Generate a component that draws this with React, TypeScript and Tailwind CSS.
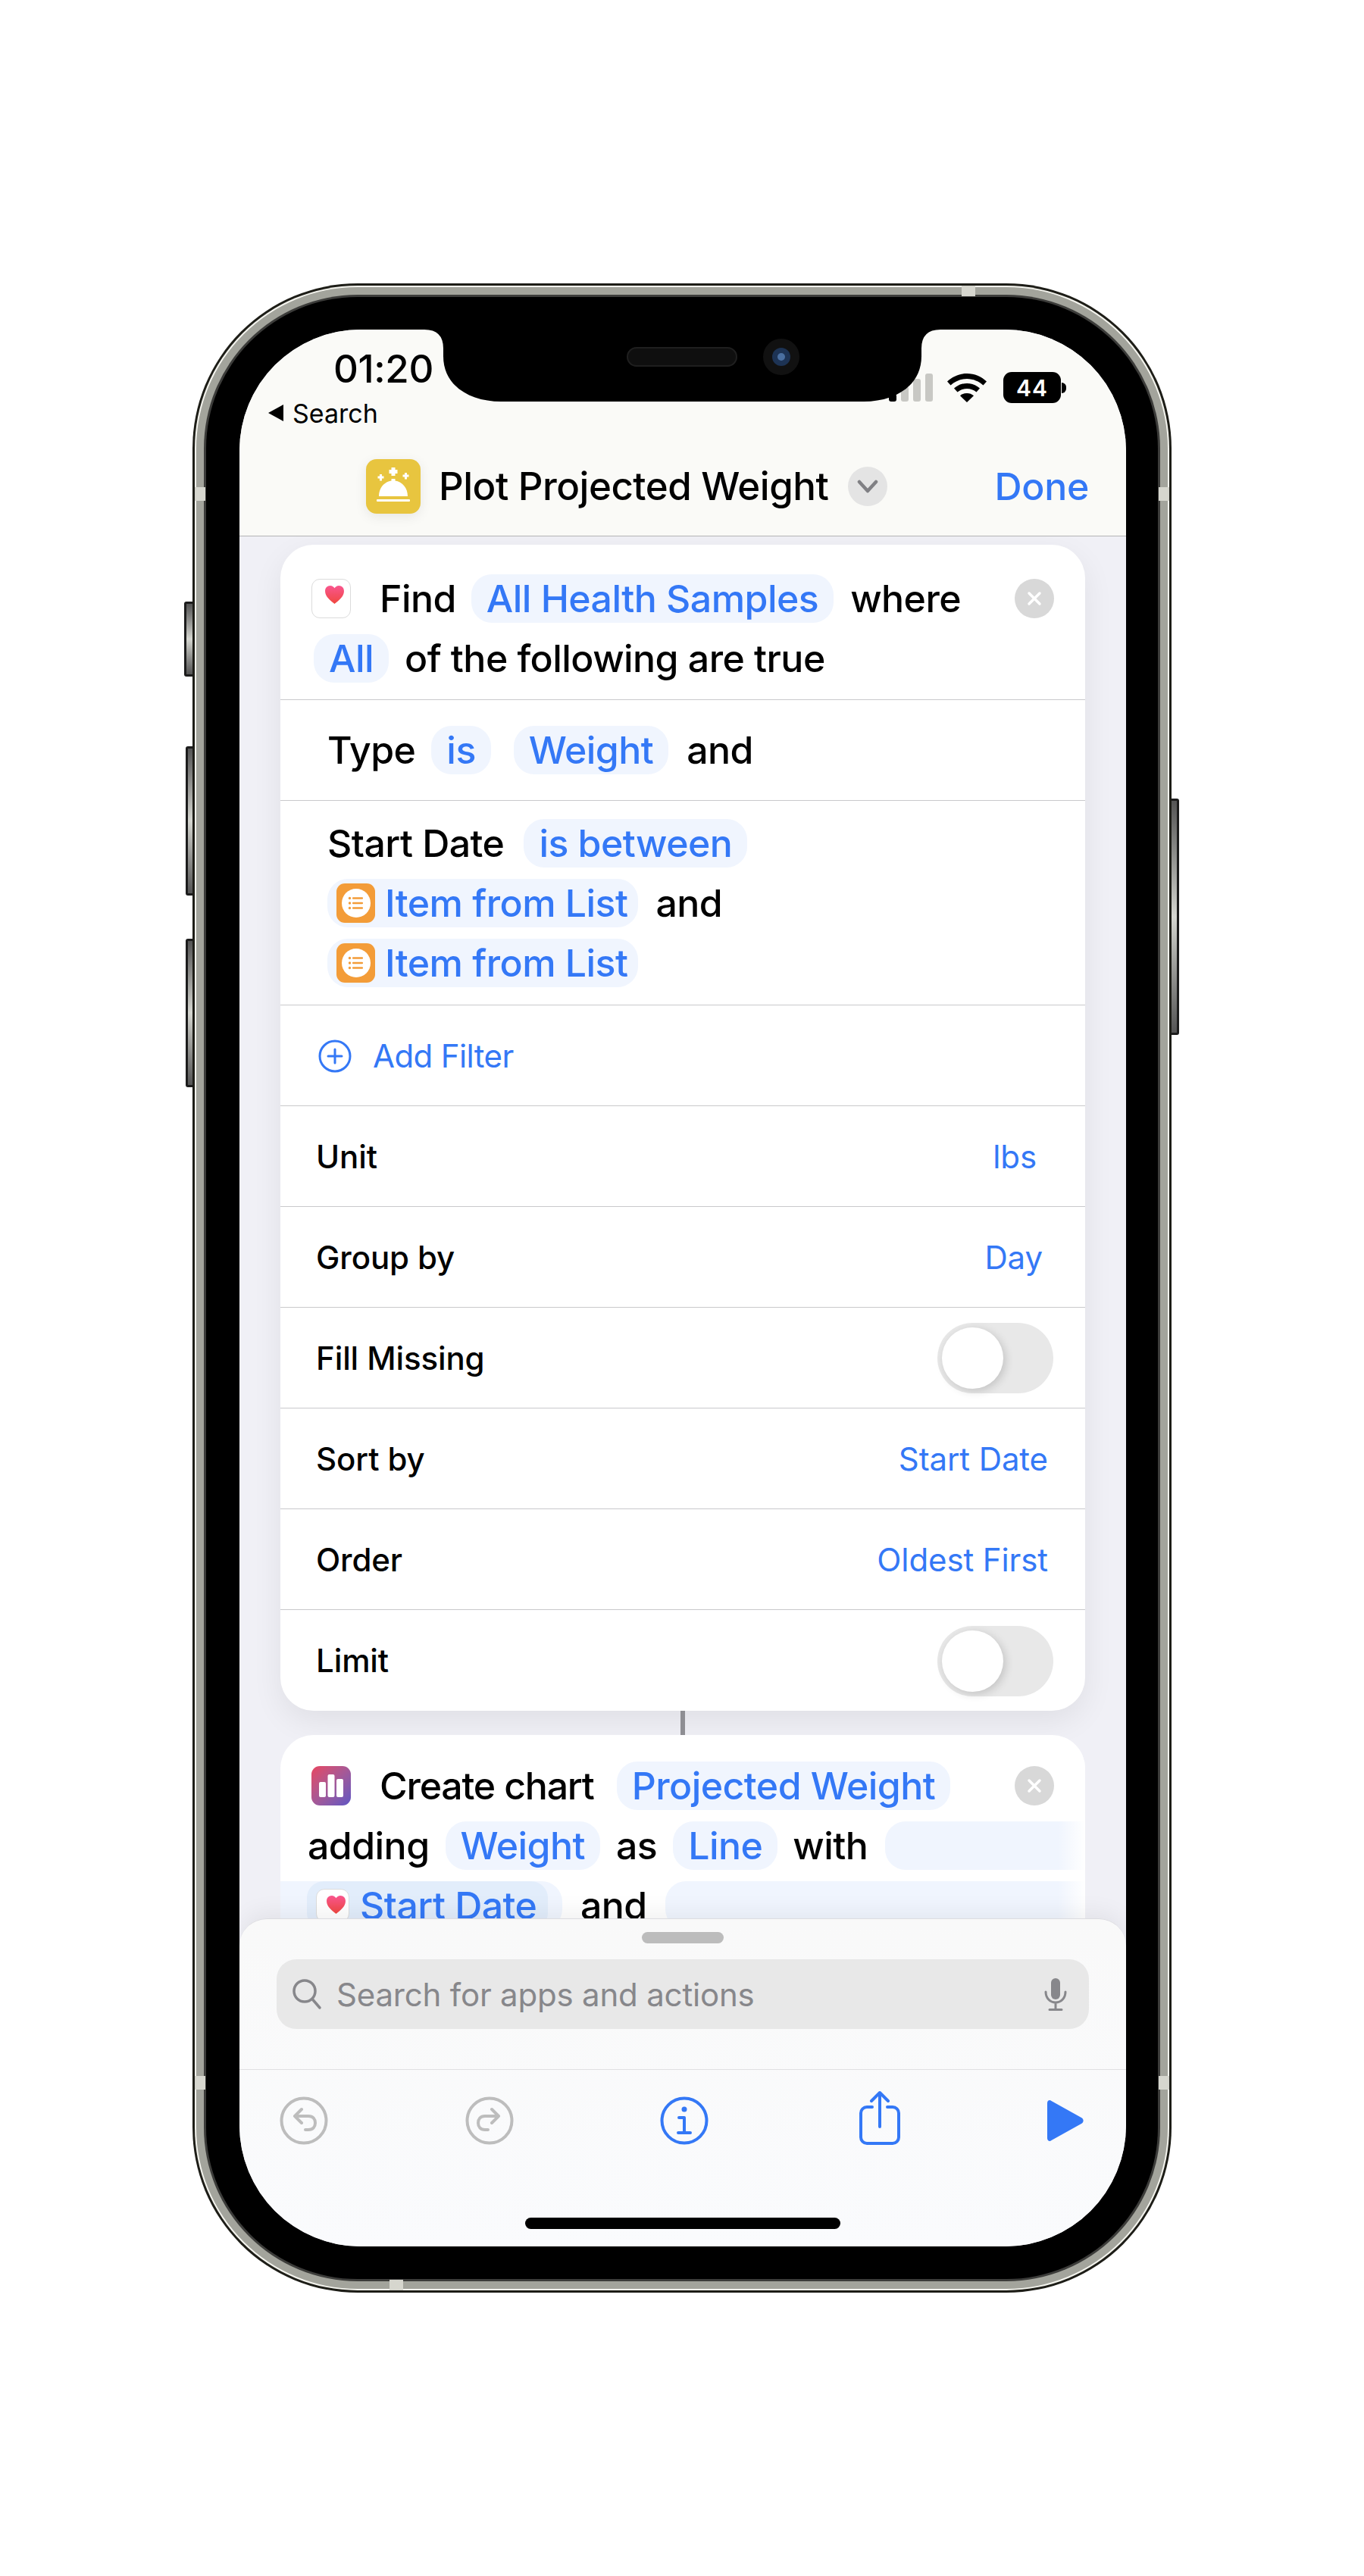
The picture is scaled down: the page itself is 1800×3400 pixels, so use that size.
import type { ReactNode } from 'react';

function Pill({ children, className = 'px-[20px]' }: { children: ReactNode; className?: string }) {
  return (
    <span className={`inline-flex h-[64px] shrink-0 items-center whitespace-nowrap rounded-[27px] bg-[#f0f5fe] text-[#3478f6] ${className}`}>
      {children}
    </span>
  );
}

function HeartIcon({ size = 52 }: { size?: number }) {
  return (
    <span
      className="inline-flex shrink-0 items-start justify-center rounded-[11px] border border-[#dcdcdc] bg-white pl-[9px] pt-[8px]"
      style={{ width: size, height: size }}
    >
      <svg width="25" height="24" viewBox="0 0 26 25" className="shrink-0">
        <defs>
          <linearGradient id="heart" x1="0" y1="0" x2="0" y2="1">
            <stop offset="0" stopColor="#f9568f" />
            <stop offset="1" stopColor="#f0473f" />
          </linearGradient>
        </defs>
        <path d="M13 25C7 20 0 15 0 7.500C0 3 3 0 7 0c2.600 0 4.800 1.300 6 3.500C14.200 1.300 16.400 0 19 0c4 0 7 3 7 7.500C26 15 19 20 13 25Z" fill="url(#heart)" />
      </svg>
    </span>
  );
}

function ListIcon() {
  return (
    <span className="mr-[13px] inline-flex h-[52px] w-[51px] shrink-0 items-center justify-center rounded-[11px] bg-[#f39c38]">
      <svg width="38" height="38" viewBox="0 0 38 38">
        <circle cx="19" cy="19" r="19" fill="#fff" />
        <g fill="#f39c38">
          <circle cx="10.500" cy="12.500" r="1.700" />
          <circle cx="10.500" cy="19" r="1.700" />
          <circle cx="10.500" cy="25.500" r="1.700" />
          <rect x="14" y="11.300" width="14" height="2.400" rx="1" />
          <rect x="14" y="17.800" width="14" height="2.400" rx="1" />
          <rect x="14" y="24.300" width="14" height="2.400" rx="1" />
        </g>
      </svg>
    </span>
  );
}

function CloseButton() {
  return (
    <span className="absolute right-[41px] flex h-[52px] w-[52px] items-center justify-center rounded-full bg-[#d8d8d8]">
      <svg width="20" height="20" viewBox="0 0 20 20" fill="none" stroke="#fff" strokeWidth="3.500" strokeLinecap="round">
        <path d="M3 3l14 14M17 3L3 17" />
      </svg>
    </span>
  );
}

function Toggle() {
  return (
    <span className="flex h-[93px] w-[153px] items-center rounded-full bg-[#e8e8e8] pl-[6px]">
      <span className="h-[81px] w-[81px] rounded-full bg-white shadow-[3px_3px_12px_rgba(0,0,0,0.16)]" />
    </span>
  );
}

function SettingRow({ label, value, valueClass = '', toggle }: { label: string; value?: string; valueClass?: string; toggle?: boolean }) {
  return (
    <div className="flex h-[133px] items-center justify-between border-b border-[#c9c9cb] pl-[47px] pr-[42px] pt-[1px] last:border-b-0">
      <span className="text-[42px] font-medium tracking-[-0.1px] text-black">{label}</span>
      {value && <span className={`text-[42px] font-normal tracking-[-0.1px] text-[#3478f6] ${valueClass}`}>{value}</span>}
      {toggle && <Toggle />}
    </div>
  );
}

function SideButton({ className }: { className: string }) {
  return (
    <div className={`absolute rounded-[3px] border-[3px] border-[#1c1c1c] bg-linear-to-b from-[#555] via-[#d5d6d0] to-[#555] ${className}`} />
  );
}

export default function App() {
  return (
    <div className="flex h-[3400px] w-[1800px] items-center justify-center bg-white font-[family-name:Inter,'Liberation_Sans',sans-serif]">
      <div className="relative h-[2652px] w-[1292px]">
        <SideButton className="left-[-11px] top-[420px] h-[99px] w-[14px]" />
        <SideButton className="left-[-9px] top-[611px] h-[197px] w-[12px]" />
        <SideButton className="left-[-9px] top-[865px] h-[196px] w-[12px]" />
        <SideButton className="right-[-10px] top-[680px] h-[312px] w-[13px]" />

        {/* Frame */}
        <div className="relative h-full w-full rounded-[218px] bg-[#1d1d17] p-[3px]">
          <div className="h-full w-full rounded-[215px] bg-[#f4f4ee] p-[2px]">
            <div className="h-full w-full rounded-[213px] bg-[#a3a49c] p-[10px]">
              <div className="h-full w-full rounded-[203px] bg-[#3c3c3a] p-[3px]">
                <div className="h-full w-full rounded-[200px] bg-black pb-[43px] pl-[44px] pr-[42px] pt-[43px]">
                  {/* Screen */}
                  <div className="relative flex h-full w-full flex-col overflow-hidden rounded-[160px] bg-[#f0f0f6] text-black">
                    {/* Nav */}
                    <div className="relative h-[273px] shrink-0 border-b border-[#b4b4b4] bg-[#fafaf7]">
                      <div className="relative flex h-[100px] items-start justify-end pr-[79px] pt-[56px]">
                        <span className="absolute left-[124px] top-[22px] text-[51px] font-medium leading-[60px] tracking-[-0.4px]">01:20</span>
                        <div className="flex items-center gap-[12px]">
                          <div className="flex items-end gap-[6px]">
                            <span className="h-[10px] w-[10px] rounded-[3px] bg-black" />
                            <span className="h-[20px] w-[10px] rounded-[3px] bg-[#c8c8c4]" />
                            <span className="h-[30px] w-[10px] rounded-[3px] bg-[#c8c8c4]" />
                            <span className="h-[37px] w-[10px] rounded-[3px] bg-[#c8c8c4]" />
                          </div>
                          <svg width="52" height="38" viewBox="0 0 52 38" className="ml-[7px]">
                            <path d="M26 0C16 0 7 4 0 10.500l4.500 5C10 10.500 17.500 7 26 7s16 3.500 21.500 8.500l4.500-5C45 4 36 0 26 0Z" />
                            <path d="M26 13c-6.500 0-12.500 2.500-17 6.500l4.500 5C17 21.500 21.300 20 26 20s9 1.500 12.500 4.500l4.500-5c-4.500-4-10.500-6.500-17-6.500Z" />
                            <path d="M26 26c-3.500 0-6.500 1.200-9 3.300L26 38l9-8.700C32.500 27.200 29.500 26 26 26Z" />
                          </svg>
                          <span className="ml-[10px] flex h-[41px] w-[76px] items-center justify-center rounded-[11px] bg-black text-[30px] font-semibold leading-none tracking-[1px] text-white">44</span>
                          <span className="ml-[-11px] h-[14px] w-[6px] rounded-r-full bg-black" />
                        </div>
                      </div>
                      <div className="flex h-[14px] items-center gap-[12px] pl-[38px] pt-[6px] text-[34px] leading-none">
                        <span className="h-0 w-0 border-y-[11px] border-r-[20px] border-y-transparent border-r-black" />
                        <span className="relative top-[1px]">Search</span>
                      </div>
                      <div className="relative mt-[57px] flex h-[72px] items-center pl-[167px]">
                        <span className="flex h-[72px] w-[72px] items-center justify-center rounded-[14px] bg-[#e8c53f] shadow-[0_4px_16px_rgba(0,0,0,0.08)]">
                          <svg width="44" height="50" viewBox="0 0 44 50" fill="#fff">
                            <path d="M19.500 3h5v3h3v5h-3v3h-5v-3h-3V6h3Z" transform="translate(0 -3)" />
                            <path d="M4 9h3v2.500h2.500v3H7v3H4v-3H1.500v-3H4Z" />
                            <path d="M37 7h3v2.500h2.500v3H40v3h-3v-3h-2.500v-3H37Z" />
                            <path d="M19.500 15h5v2.500C34 19 41 27 41 38H3c0-11 7-19 16.500-20.500Z" />
                            <rect x="0" y="42" width="44" height="3" rx="1" />
                          </svg>
                        </span>
                        <span className="ml-[24px] whitespace-nowrap text-[51px] font-medium tracking-[-0.5px]">Plot Projected Weight</span>
                        <span className="ml-[26px] flex h-[52px] w-[52px] items-center justify-center rounded-full bg-[#e4e4e4]">
                          <svg width="28" height="18" viewBox="0 0 28 18" fill="none" stroke="#808084" strokeWidth="4.500" strokeLinecap="round" strokeLinejoin="round">
                            <path d="M3 3l11 12L25 3" />
                          </svg>
                        </span>
                        <span className="absolute right-[49px] text-[50px] font-medium tracking-[-0.3px] text-[#3478f6]">Done</span>
                      </div>
                      {/* Notch */}
                      <svg width="681" height="95" viewBox="0 0 681 95" className="absolute left-[244px] top-0">
                        <path d="M0 0H681Q656 0 656 25V35C656 75 620 95 580 95H101C61 95 25 75 25 35V25Q25 0 0 0Z" fill="#000" />
                        <rect x="268" y="24" width="144" height="24" rx="12" fill="#0f0f0f" stroke="#1f1f1f" strokeWidth="2" />
                        <circle cx="471" cy="36" r="24" fill="#111" />
                        <circle cx="471" cy="36" r="12" fill="#1d3354" />
                        <circle cx="471" cy="36" r="5" fill="#4a6fa0" />
                      </svg>
                    </div>

                    {/* Canvas */}
                    <div className="relative min-h-0 flex-1 overflow-hidden px-[54px] pt-[11px] text-[50px] font-[450] leading-none tracking-[-0.55px]">
                      <div className="overflow-hidden rounded-[44px] bg-white shadow-[0_14px_40px_rgba(0,0,0,0.07)]">
                        <div className="relative h-[205px] border-b border-[#c9c9cb] pl-[41px] pt-[39px]">
                          <div className="flex h-[64px] items-center">
                            <HeartIcon />
                            <span className="ml-[38px]">Find</span>
                            <Pill className="ml-[20px] px-[20px]">All Health Samples</Pill>
                            <span className="ml-[22px]">where</span>
                            <CloseButton />
                          </div>
                          <div className="mt-[15px] flex h-[64px] items-center pl-[3px]">
                            <Pill>All</Pill>
                            <span className="ml-[21px]">of the following are true</span>
                          </div>
                        </div>
                        <div className="flex h-[133px] items-center border-b border-[#c9c9cb] pl-[62px]">
                          <span>Type</span>
                          <Pill className="ml-[21px] px-[20px]">is</Pill>
                          <Pill className="ml-[30px] px-[20px]">Weight</Pill>
                          <span className="ml-[24px]">and</span>
                        </div>
                        <div className="h-[270px] border-b border-[#c9c9cb] pl-[62px] pt-[24px]">
                          <div className="flex h-[64px] items-center">
                            <span>Start Date</span>
                            <Pill className="ml-[26px] px-[20px]">is between</Pill>
                          </div>
                          <div className="mt-[15px] flex h-[64px] items-center">
                            <Pill className="pl-[12px] pr-[14px]"><ListIcon />Item from List</Pill>
                            <span className="ml-[23px]">and</span>
                          </div>
                          <div className="mt-[15px] flex h-[64px] items-center">
                            <Pill className="pl-[12px] pr-[14px]"><ListIcon />Item from List</Pill>
                          </div>
                        </div>
                        <div className="flex h-[133px] items-center border-b border-[#c9c9cb] pl-[50px] pt-[1px] text-[42px] font-normal tracking-[-0.6px] text-[#3478f6]">
                          <svg width="44" height="44" viewBox="0 0 44 44" fill="none" stroke="#3478f6" strokeWidth="3" strokeLinecap="round">
                            <circle cx="22" cy="22" r="20" />
                            <path d="M22 13v18M13 22h18" />
                          </svg>
                          <span className="ml-[28px]">Add Filter</span>
                        </div>
                        <SettingRow label="Unit" value="lbs" valueClass="pr-[22px]" />
                        <SettingRow label="Group by" value="Day" valueClass="pr-[14px]" />
                        <SettingRow label="Fill Missing" toggle />
                        <SettingRow label="Sort by" value="Start Date" valueClass="pr-[7px]" />
                        <SettingRow label="Order" value="Oldest First" valueClass="pr-[7px]" />
                        <SettingRow label="Limit" toggle />
                      </div>
                      <div className="mx-auto h-[32px] w-[6px] bg-[#8e8e93]" />
                      <div className="relative h-[400px] overflow-hidden rounded-t-[44px] bg-white">
                        <div className="relative mt-[35px] flex h-[64px] items-center pl-[41px]">
                          <span className="inline-flex h-[52px] w-[52px] shrink-0 items-center justify-center rounded-[11px] bg-linear-to-br from-[#e8435f] to-[#5f54c4]">
                            <svg width="34" height="30" viewBox="0 0 34 30" fill="#fff">
                              <rect x="1" y="10" width="9" height="20" rx="2" />
                              <rect x="12.500" y="0" width="9" height="30" rx="2" />
                              <rect x="24" y="6" width="9" height="24" rx="2" />
                            </svg>
                          </span>
                          <span className="ml-[38px] tracking-[-1.2px]">Create chart</span>
                          <Pill className="ml-[30px] px-[20px]">Projected Weight</Pill>
                          <CloseButton />
                        </div>
                        <div className="mt-[15px] flex h-[64px] items-center pl-[36px]">
                          <span>adding</span>
                          <Pill className="ml-[21px] px-[20px]">Weight</Pill>
                          <span className="ml-[21px]">as</span>
                          <Pill className="ml-[21px] px-[20px]">Line</Pill>
                          <span className="ml-[20px]">with</span>
                          <span className="ml-[23px] h-[64px] w-[300px] shrink-0 rounded-l-[27px] bg-[#f0f5fe]" />
                        </div>
                        <div className="mt-[15px] flex h-[64px] items-center">
                          <span className="flex h-[64px] w-[372px] shrink-0 items-center rounded-r-[27px] bg-[#f0f5fe] pl-[35px]">
                            <span className="flex h-[64px] w-[318px] items-center rounded-[22px] bg-[#e2edfb] pl-[12px] text-[#3478f6]">
                              <HeartIcon size={44} />
                              <span className="ml-[14px] whitespace-nowrap">Start Date</span>
                            </span>
                          </span>
                          <span className="ml-[24px]">and</span>
                          <span className="ml-[24px] h-[64px] w-[560px] shrink-0 rounded-l-[27px] bg-[#f0f5fe]" />
                        </div>
                        <div className="absolute inset-y-0 right-0 w-[36px] bg-linear-to-r from-white/0 to-white" />
                      </div>
                    </div>

                    {/* Sheet */}
                    <div className="relative -mt-[36px] h-[433px] shrink-0 rounded-t-[36px] border-t border-[#dcdce0] bg-linear-to-b from-[#f9f9f9] to-[#fafbfd] shadow-[0_-8px_30px_rgba(0,0,0,0.06)]">
                      <div className="mx-auto mt-[17px] h-[15px] w-[108px] rounded-full bg-[#bcbcbc]" />
                      <div className="mx-[49px] mt-[21px] flex h-[92px] items-center rounded-[26px] bg-[#e8e8e8] pl-[20px] pr-[29px] text-[42px] text-[#87878b]">
                        <svg width="40" height="42" viewBox="0 0 40 42" fill="none" stroke="#87878b" strokeWidth="3.500" strokeLinecap="round">
                          <circle cx="17" cy="17" r="14" />
                          <path d="M27.500 28L37 39" />
                        </svg>
                        <span className="ml-[19px] flex-1 whitespace-nowrap tracking-[-0.2px]">Search for apps and actions</span>
                        <svg width="30" height="44" viewBox="0 0 30 44" fill="none" stroke="#87878b" strokeWidth="3" strokeLinecap="round">
                          <rect x="9" y="1" width="12" height="28" rx="6" fill="#87878b" stroke="none" />
                          <path d="M2 19c0 8 5.500 14 13 14s13-6 13-14M15 33v9M7 42.500h16" />
                        </svg>
                      </div>
                      <div className="mt-[53px] flex items-center border-t border-[#e0e0e2] pl-[53px] pt-[35px]">
                        <svg width="64" height="64" viewBox="0 0 64 64" fill="none" stroke="#bdbdbd" strokeWidth="4" strokeLinecap="round" strokeLinejoin="round">
                          <circle cx="32" cy="32" r="29.500" />
                          <path d="M29 17l-9 9 9 9M20 26h18c6 0 9 4 9 9s-3 9-9 9h-4" />
                        </svg>
                        <svg width="64" height="64" viewBox="0 0 64 64" fill="none" stroke="#bdbdbd" strokeWidth="4" strokeLinecap="round" strokeLinejoin="round" className="ml-[181px]">
                          <circle cx="32" cy="32" r="29.500" />
                          <path d="M35 17l9 9-9 9M44 26H26c-6 0-9 4-9 9s3 9 9 9h4" />
                        </svg>
                        <svg width="64" height="64" viewBox="0 0 64 64" fill="none" stroke="#3478f6" strokeWidth="4" strokeLinecap="round" strokeLinejoin="round" className="ml-[193px]">
                          <circle cx="32" cy="32" r="29.500" />
                          <circle cx="32" cy="17" r="3.500" fill="#3478f6" stroke="none" />
                          <path d="M25 28h7v19M24 48h16" />
                        </svg>
                        <svg width="54" height="72" viewBox="0 0 54 72" fill="none" stroke="#3478f6" strokeWidth="4" strokeLinecap="round" strokeLinejoin="round" className="ml-[199px] -mt-[8px]">
                          <path d="M17 22H10a8 8 0 0 0-8 8v32a8 8 0 0 0 8 8h34a8 8 0 0 0 8-8V30a8 8 0 0 0-8-8h-7" />
                          <path d="M27 48V3M16 14L27 3l11 11" />
                        </svg>
                        <svg width="48" height="54" viewBox="0 0 48 54" className="ml-[194px]">
                          <path d="M0 4C0 .5 3-1 5.500 1L45 23c3.500 2 3.500 6 0 8L5.500 53C3 55 0 53.500 0 50Z" fill="#3478f6" />
                        </svg>
                      </div>
                      <div className="absolute bottom-[23px] left-1/2 h-[15px] w-[416px] -translate-x-1/2 rounded-full bg-black" />
                    </div>
                  </div>
                </div>
              </div>
            </div>
          </div>
          {/* Antenna bands */}
          <div className="absolute left-[3px] top-[269px] h-[18px] w-[14px] bg-[#d6d6ce]" />
          <div className="absolute right-[3px] top-[269px] h-[18px] w-[14px] bg-[#d6d6ce]" />
          <div className="absolute left-[3px] bottom-[268px] h-[18px] w-[14px] bg-[#d6d6ce]" />
          <div className="absolute right-[3px] bottom-[268px] h-[18px] w-[14px] bg-[#d6d6ce]" />
          <div className="absolute left-[1015px] top-[3px] h-[14px] w-[18px] bg-[#d6d6ce]" />
          <div className="absolute left-[260px] bottom-[3px] h-[14px] w-[18px] bg-[#d6d6ce]" />
        </div>
      </div>
    </div>
  );
}
